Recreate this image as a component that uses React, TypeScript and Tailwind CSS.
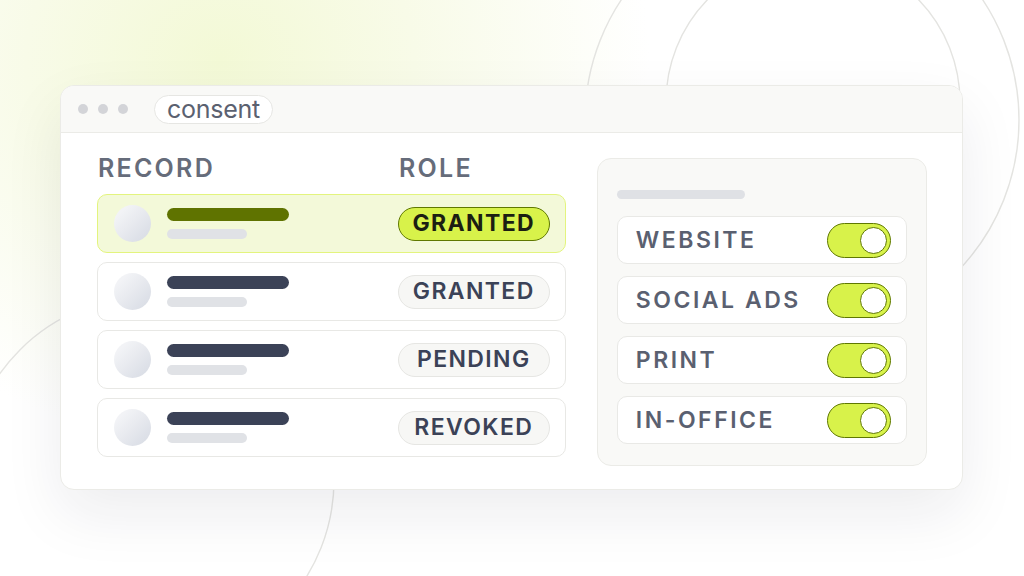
import React from 'react';

const records = [
  { status: 'GRANTED', active: true },
  { status: 'GRANTED', active: false },
  { status: 'PENDING', active: false },
  { status: 'REVOKED', active: false },
];

const channels = ['WEBSITE', 'SOCIAL ADS', 'PRINT', 'IN-OFFICE'];

function Backdrop() {
  return (
    <svg className="absolute inset-0" width="1024" height="576" viewBox="0 0 1024 576">
      <defs>
        <radialGradient id="glow" cx="220" cy="60" r="430" gradientUnits="userSpaceOnUse" gradientTransform="translate(220 60) scale(1 0.9) translate(-220 -60)">
          <stop offset="0" stopColor="#f3f9d6" />
          <stop offset="0.45" stopColor="#f8fbe8" />
          <stop offset="1" stopColor="#ffffff" />
        </radialGradient>
      </defs>
      <rect width="1024" height="576" fill="url(#glow)" />
      <g fill="none" stroke="#e4e4e1" strokeWidth="1.4">
        <circle cx="802" cy="120" r="217" />
        <circle cx="813" cy="102" r="147" />
        <circle cx="150" cy="480" r="184" />
      </g>
    </svg>
  );
}

function Toggle() {
  return (
    <div className="w-[64px] h-[35px] rounded-full bg-[#d8f24a] border-[1.5px] border-[#5f7800] flex items-center justify-end pr-[3px]">
      <div className="w-[27px] h-[27px] rounded-full bg-white border-[1.5px] border-[#5f7800]" />
    </div>
  );
}

export default function App() {
  return (
    <div className="relative w-[1024px] h-[576px] overflow-hidden bg-white font-[Inter,sans-serif]">
      <Backdrop />

      <div className="relative pt-[85px] pl-[60px]">
        <div className="w-[903px] h-[405px] rounded-[14px] border border-[#ebebe7] bg-white overflow-hidden shadow-[0_24px_60px_rgba(30,30,50,0.08)] flex flex-col">
          {/* title bar */}
          <div className="h-[47px] shrink-0 bg-[#f9f9f7] border-b border-[#ebebe7] flex items-center pl-[17px]">
            <div className="flex gap-[10px]">
              <span className="w-[10px] h-[10px] rounded-full bg-[#d3d4d8]" />
              <span className="w-[10px] h-[10px] rounded-full bg-[#d3d4d8]" />
              <span className="w-[10px] h-[10px] rounded-full bg-[#d3d4d8]" />
            </div>
            <div className="ml-[26px] h-[29px] px-[12px] rounded-full bg-white border border-[#e6e6e3] flex items-center text-[25px] leading-none text-[#5b6170] tracking-[-0.01em]">
              consent
            </div>
          </div>

          {/* body */}
          <div className="flex-1 flex gap-[31px] pl-[36px] pr-[35px] pt-[25px]">
            {/* records */}
            <div className="w-[470px] flex flex-col">
              <div className="h-[37px] flex text-[25px] leading-none font-semibold tracking-[0.09em] text-[#666c7a] -mt-[2px]">
                <span className="w-[302px] pl-[1px]">RECORD</span>
                <span>ROLE</span>
              </div>
              <div className="flex flex-col gap-[9px] mt-[1px]">
                {records.map((r, i) => (
                  <div
                    key={i}
                    className={
                      r.active
                        ? 'h-[59px] rounded-[10px] border-[1.5px] border-[#e3f47e] bg-[#f3f9d9] flex items-center pl-[16px] pr-[15px]'
                        : 'h-[59px] rounded-[10px] border border-[#e8e8e5] bg-white flex items-center pl-[16px] pr-[15px]'
                    }
                  >
                    <div className="w-[37px] h-[37px] rounded-full bg-[linear-gradient(135deg,#f2f3f6_20%,#d6dae3_100%)]" />
                    <div className="ml-[16px] flex flex-col gap-[8px]">
                      <div className={r.active ? 'w-[122px] h-[13px] rounded-full bg-[#5f7300]' : 'w-[122px] h-[13px] rounded-full bg-[#3b4257]'} />
                      <div className="w-[80px] h-[10px] rounded-full bg-[#e0e2e6]" />
                    </div>
                    <div className="flex-1" />
                    <div
                      className={
                        r.active
                          ? 'w-[152px] h-[34px] rounded-full bg-[#d8f24a] border-[1.5px] border-[#5f7800] flex items-center justify-center text-[23px] leading-none font-bold tracking-[0.06em] text-[#1b1e12]'
                          : 'w-[152px] h-[34px] rounded-full bg-[#f7f7f5] border border-[#e6e6e3] flex items-center justify-center text-[23px] leading-none font-semibold tracking-[0.06em] text-[#3b4257]'
                      }
                    >
                      {r.status}
                    </div>
                  </div>
                ))}
              </div>
            </div>

            {/* consent channels */}
            <div className="w-[331px] h-[308px] rounded-[14px] border border-[#ebebe7] bg-[#f9f9f7] px-[19px] pt-[31px]">
              <div className="w-[128px] h-[9px] rounded-full bg-[#dfe1e5]" />
              <div className="mt-[17px] flex flex-col gap-[12px]">
                {channels.map(c => (
                  <div key={c} className="h-[48px] rounded-[10px] border border-[#e9e9e6] bg-white flex items-center justify-between pl-[18px] pr-[15px]">
                    <span className="text-[23px] leading-none font-semibold tracking-[0.11em] text-[#5a6070]">{c}</span>
                    <Toggle />
                  </div>
                ))}
              </div>
            </div>
          </div>
        </div>
      </div>
    </div>
  );
}
